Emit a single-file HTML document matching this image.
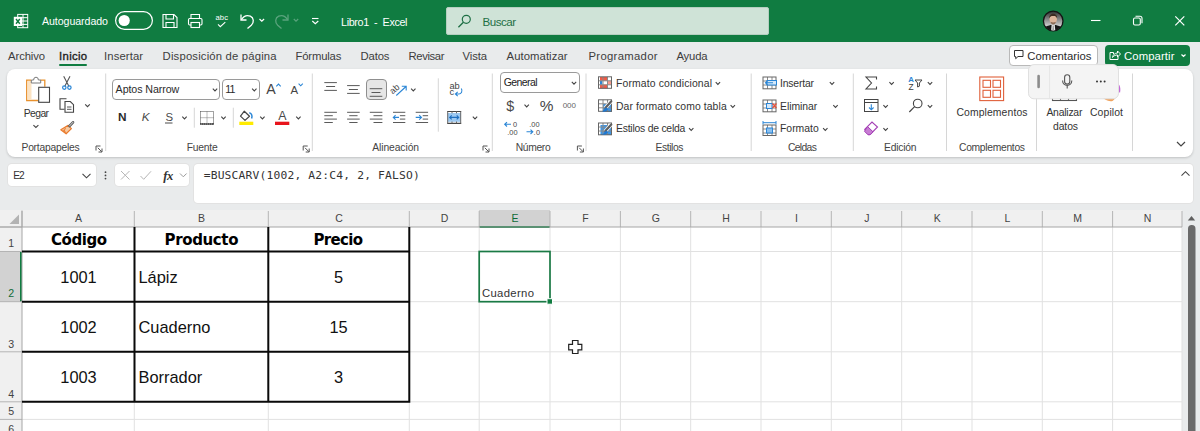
<!DOCTYPE html>
<html lang="es"><head><meta charset="utf-8"><title>Libro1 - Excel</title>
<style>
html,body{margin:0;padding:0}
body{width:1200px;height:431px;overflow:hidden;position:relative;background:#e9ebec;font-family:'Liberation Sans', sans-serif}
.b{position:absolute;box-sizing:border-box}
span{position:absolute;white-space:pre;line-height:1}
svg{position:absolute;left:0;top:0}
</style></head><body>
<div class="b" style="left:0;top:0;width:1200px;height:42px;background:#107c41"></div>
<div class="b" style="left:446px;top:7px;width:323px;height:28px;background:#cfe3d7;border:1px solid #b5cfc0;border-radius:2px"></div>
<div class="b" style="left:59px;top:64px;width:28px;height:2px;background:#107c41;border-radius:1px"></div>
<div class="b" style="left:1008.5px;top:45px;width:89px;height:20.5px;background:#fff;border:1px solid #b9b9b9;border-radius:4px"></div>
<div class="b" style="left:1105px;top:45px;width:85px;height:20.5px;background:#107c41;border-radius:4px"></div>
<div class="b" style="left:7px;top:69px;width:1186px;height:87.5px;background:#fff;border-radius:8px;box-shadow:0 1px 2.500px rgba(0,0,0,.18)"></div>
<div class="b" style="left:112px;top:79px;width:108px;height:21px;background:#fff;border:1px solid #9a9a9a;border-radius:4px"></div>
<div class="b" style="left:222px;top:79px;width:38px;height:21px;background:#fff;border:1px solid #9a9a9a;border-radius:4px"></div>
<div class="b" style="left:365.800px;top:79px;width:21px;height:21.200px;background:#e6e6e6;border:1px solid #8f8f8f;border-radius:4px"></div>
<div class="b" style="left:500px;top:72px;width:80px;height:21px;background:#fff;border:1px solid #9a9a9a;border-radius:4px"></div>
<div class="b" style="left:8px;top:164px;width:88px;height:22px;background:#fff;border-radius:4px;box-shadow:0 0 0 1px #e2e2e2"></div>
<div class="b" style="left:115px;top:164px;width:74px;height:22px;background:#fff;border-radius:4px;box-shadow:0 0 0 1px #e2e2e2"></div>
<div class="b" style="left:194px;top:164px;width:999px;height:39px;background:#fff;border-radius:4px;box-shadow:0 0 0 1px #e2e2e2"></div>
<div class="b" style="left:0;top:210px;width:1182px;height:221px;background:#fff"></div>
<div class="b" style="left:0;top:210px;width:1182px;height:17px;background:#f0f0f0"></div>
<div class="b" style="left:0;top:210px;width:22px;height:221px;background:#f0f0f0"></div>
<div class="b" style="left:479px;top:210px;width:71px;height:17.500px;background:#d2d2d2;border-bottom:2px solid #107c41"></div>
<div class="b" style="left:0;top:251.500px;width:22px;height:50.200px;background:#d2d2d2;border-right:2px solid #107c41"></div>
<svg width="1200" height="431" viewBox="0 0 1200 431" fill="none" stroke-linecap="butt">
<g stroke="#fff" stroke-width="1" fill="none"><rect x="17.700" y="14.400" width="10" height="13.300"/><path d="M17.700 17.700h10M17.700 21h10M17.700 24.400h10M23 14.400v13.300"/></g><rect x="13.800" y="16.800" width="8.200" height="9.200" fill="#fff"/><path d="M16 19l3.800 4.800M19.800 19l-3.800 4.800" stroke="#107c41" stroke-width="1.400"/>
<rect x="115.6" y="11.6" width="36.8" height="17.8" rx="8.9" stroke="#fff" stroke-width="1.2"/><circle cx="124.2" cy="20.5" r="5.6" fill="#fff"/>
<g stroke="#fff" stroke-width="1.1"><path d="M163 14.5h11l3 3v10h-14z"/><path d="M166 14.5v4.5h7.5v-4.5M166 27.5v-5h8v5"/></g>
<g stroke="#fff" stroke-width="1.1"><path d="M191 18.5v-4h8.500v4"/><rect x="188.5" y="18.5" width="13.500" height="6.500" rx="1.2"/><rect x="191" y="22.5" width="8.500" height="5" fill="#107c41"/></g>
<path d="M218 24.3l2.300 2.400 5-4.600" stroke="#fff" stroke-width="1.1"/>
<g stroke="#fff" stroke-width="1.3"><path d="M241 14.500v5.500h5.500"/><path d="M241.300 19.700c2-3 5.500-5 9-3.500 3.600 1.700 4 6 1 9l-3.800 3.300"/></g>
<path d="M259.500 19l2.300 2.200 2.300-2.200" stroke="#fff" stroke-width="1.2"/>
<g stroke="#5aa37d" stroke-width="1.300"><path d="M288 14.500v5.500h-5.500"/><path d="M287.700 19.700c-2-3-5.500-5-9-3.500-3.600 1.700-4 6-1 9l3.800 3.300"/></g>
<path d="M293.800 19l2.200 2.200 2.200-2.200" stroke="#5aa37d" stroke-width="1.200"/>
<path d="M312 18.500h6.500" stroke="#fff" stroke-width="1.100"/><path d="M312.300 21l3 2.600 3-2.600" stroke="#fff" stroke-width="1.200"/>
<circle cx="466.300" cy="19.300" r="4" stroke="#1e6f45" stroke-width="1.200"/><path d="M463.400 22.300l-5 5" stroke="#1e6f45" stroke-width="1.300"/>
<defs><linearGradient id="avg" x1="0" y1="0" x2="0" y2="1"><stop offset="0" stop-color="#2e2e2e"/><stop offset=".75" stop-color="#cfcfcf"/><stop offset="1" stop-color="#bdbdbd"/></linearGradient><clipPath id="avc"><circle cx="1053.200" cy="21" r="9.600"/></clipPath></defs><circle cx="1053.200" cy="21" r="9.800" fill="url(#avg)" stroke="#141414" stroke-width="1.300"/><g clip-path="url(#avc)"><path d="M1043 32v-3.500c2.500-2.300 6-3 7.500-3.500h5.400c1.500.5 5 1.200 7.500 3.500v3.500z" fill="#161616"/><path d="M1051.600 25h3.200l.6 7h-4.400z" fill="#e9e9e9"/><path d="M1052.700 25.500h1l.5 6h-2z" fill="#9a9a9a"/><ellipse cx="1053.200" cy="19.300" rx="3.700" ry="4.900" fill="#dcb49a"/><path d="M1049.300 18.300c-.6-6 8.400-6 7.800 0-.8-1.800-1.600-2.300-3.900-2.300s-3.100.5-3.900 2.300z" fill="#3b2a20"/><path d="M1050.600 21.800c1.600.8 3.600.8 5.200 0-.2 2-1.200 2.600-2.600 2.600s-2.400-.6-2.600-2.600z" fill="#8a6a55"/></g>
<path d="M1091 20.500h9.500" stroke="#fff" stroke-width="1.100"/>
<g stroke="#fff" stroke-width="1.100"><rect x="1133.500" y="18" width="6.800" height="7" rx="1.400"/><path d="M1135.500 16.200h4.500a2 2 0 0 1 2 2v5"/></g>
<path d="M1175.300 16.300l9 9M1184.300 16.300l-9 9" stroke="#fff" stroke-width="1.200"/>
<path d="M1014.500 50.500h8.500v6h-5l-2.300 2.200v-2.200h-1.200z" stroke="#333" stroke-width="1"/>
<g stroke="#fff" stroke-width="1"><path d="M1113.500 54v-1.500h-3.500v7h8v-3"/><path d="M1112.500 57.500c.5-3 2.500-4.500 5-4.500v-2l3 3-3 3v-2c-2 0-3.500.5-5 2.500z"/></g>
<path d="M1181.500 54.500l2 2 2-2" stroke="#fff" stroke-width="1.200"/>
<path d="M31 80.200h-4.300v20.300h11.500" stroke="#e8912d" stroke-width="1.300"/><path d="M40.500 80.200h4.300v6.500" stroke="#e8912d" stroke-width="1.300"/><path d="M27.500 81h4v19h-4z" fill="#fbe3c3" stroke="none"/><path d="M31.300 83v-3h2.300a2.400 2.800 0 0 1 4.800 0h2.300v3z" fill="#fff" stroke="#7a7a7a" stroke-width="1"/><rect x="38.700" y="87.300" width="10.800" height="15" fill="#fff" stroke="#444" stroke-width="1.100"/>
<path d="M33.40 125.10l2.50 2.40 2.50 -2.40" stroke="#444" stroke-width="1.1"/>
<g stroke="#555" stroke-width="1.100"><path d="M63.700 76.300l5.300 10.200M70 76.300l-5.300 10.200"/></g><circle cx="64.300" cy="87.600" r="1.700" stroke="#2b86d6" stroke-width="1.200"/><circle cx="69.400" cy="87.600" r="1.700" stroke="#2b86d6" stroke-width="1.200"/>
<g stroke="#444" stroke-width="1.100"><path d="M64.500 109.300h-4.500v-10.500h6.500"/><path d="M65 101.500h5.300l3.200 3.200v7.500h-8.500z" fill="#fff"/><path d="M67 107h4.500M67 109.300h4.500" stroke-width=".9"/></g>
<path d="M85.20 104.35l2.30 2.30 2.30 -2.30" stroke="#444" stroke-width="1.1"/>
<path d="M68.200 125.300l3.200 3.300-5.300 5.200-5.300-4z" fill="#f7c9a0" stroke="#ea7a2c" stroke-width="1.200" stroke-linejoin="round"/><path d="M63.200 130l3 2.700M65.500 127.800l-1.700 4" stroke="#ea7a2c" stroke-width="1"/><path d="M73 122.300l-3.600 3.800" stroke="#555" stroke-width="2.600" stroke-linecap="round"/><path d="M73 122.300l-3.600 3.800" stroke="#fff" stroke-width=".8" stroke-linecap="round"/>
<g stroke="#555" stroke-width="1"><path d="M96.0 150.5V146.0H100.5"/><path d="M97.8 147.8L101.8 151.8"/><path d="M102.0 148.5V152.0H98.5" /></g>
<path d="M105.7 73.5V151" stroke="#d6d6d6" stroke-width="1"/>
<path d="M212.80 88.70l2.20 2.20 2.20 -2.20" stroke="#444" stroke-width="1.1"/>
<path d="M252.10 88.70l2.20 2.20 2.20 -2.20" stroke="#444" stroke-width="1.1"/>
<path d="M276.300 86.300l2.200-2.200 2.200 2.200" stroke="#2b86d6" stroke-width="1.100"/>
<path d="M298.600 83.700l2.100 2.100 2.100-2.100" stroke="#2b86d6" stroke-width="1.100"/>
<path d="M165 123h7.500" stroke="#4a4a4a" stroke-width="1"/>
<path d="M182.30 116.70l2.20 2.20 2.20 -2.20" stroke="#444" stroke-width="1.1"/>
<path d="M194.3 107.7V127.7" stroke="#d6d6d6" stroke-width="1"/>
<g stroke="#444" stroke-width="1" stroke-dasharray="1 1"><rect x="200.500" y="111.500" width="13" height="12.500"/></g><path d="M200 124h14" stroke="#222" stroke-width="1.200"/><path d="M207 111.500v12.500M200.500 117.700h13" stroke="#777" stroke-width="1" stroke-dasharray="1 1"/>
<path d="M221.30 116.70l2.20 2.20 2.20 -2.20" stroke="#444" stroke-width="1.1"/>
<path d="M233.3 107.7V127.7" stroke="#d6d6d6" stroke-width="1"/>
<path d="M244.300 111.200l5.200 5-4.500 4.200-4.500-4.300z" fill="#fff" stroke="#444" stroke-width="1.200" stroke-linejoin="round"/><path d="M249.300 112.800c2.600.6 3.200 3.200 2.300 5.600" stroke="#2b86d6" stroke-width="1.500" fill="none"/><rect x="239.300" y="121.700" width="14" height="3.300" fill="#ffeb00"/>
<path d="M260.20 116.70l2.20 2.20 2.20 -2.20" stroke="#444" stroke-width="1.1"/>
<rect x="275" y="121.700" width="14.300" height="3.300" fill="#e8141c"/>
<path d="M296.20 116.70l2.20 2.20 2.20 -2.20" stroke="#444" stroke-width="1.1"/>
<g stroke="#555" stroke-width="1"><path d="M303.2 150.5V146.0H307.7"/><path d="M305.0 147.8L309.0 151.8"/><path d="M309.2 148.5V152.0H305.7" /></g>
<path d="M312.3 73.5V151" stroke="#d6d6d6" stroke-width="1"/>
<path d="M324.30 82.60h12.60M326.10 86.50h9.00M324.30 90.40h12.60" stroke="#5a5a5a" stroke-width="1.0"/>
<path d="M347.10 85.60h12.60M348.90 89.50h9.00M347.10 93.40h12.60" stroke="#5a5a5a" stroke-width="1.0"/>
<path d="M369.70 88.70h12.60M371.50 92.50h9.00M369.70 96.30h12.60" stroke="#5a5a5a" stroke-width="1.0"/>
<path d="M396.300 95.500l9.700-9M401.800 86.200h4.400v4.400" stroke="#2b86d6" stroke-width="1.100"/>
<path d="M411.10 88.70l2.20 2.20 2.20 -2.20" stroke="#444" stroke-width="1.1"/>
<path d="M324.30 112.30h12.60M324.30 115.70h8.50M324.30 119.10h12.60M324.30 122.50h8.50" stroke="#5a5a5a" stroke-width="1.0"/>
<path d="M347.10 112.30h12.60M349.25 115.70h8.30M347.10 119.10h12.60M349.25 122.50h8.30" stroke="#5a5a5a" stroke-width="1.0"/>
<path d="M369.80 112.30h12.60M373.50 115.70h8.90M369.80 119.10h12.60M373.50 122.50h8.90" stroke="#5a5a5a" stroke-width="1.0"/>
<path d="M393.00 112.30h12.30M399.90 115.70h5.40M399.90 119.10h5.40M393.00 122.50h12.30" stroke="#5a5a5a" stroke-width="1.0"/>
<path d="M399 117.400h-5.800M395.600 115.200l-2.300 2.200 2.300 2.200" stroke="#2b86d6" stroke-width="1.100"/>
<path d="M415.70 112.30h12.40M422.70 115.70h5.40M422.70 119.10h5.40M415.70 122.50h12.40" stroke="#5a5a5a" stroke-width="1.0"/>
<path d="M415.700 117.400h5.800M419.200 115.200l2.300 2.200-2.300 2.200" stroke="#2b86d6" stroke-width="1.100"/>
<path d="M438.3 78.3V131.7" stroke="#d6d6d6" stroke-width="1"/>
<path d="M461.300 88.500c1.600 2.500 0 5.500-2.500 5.500h-3.300M457.700 91.800l-2.300 2.200 2.300 2.200" stroke="#2b86d6" stroke-width="1.100"/>
<rect x="447.700" y="113" width="13" height="8.800" fill="#9cc9f2"/><path d="M447.200 111.500h14M447.200 123.300h14" stroke="#444" stroke-width="1.200"/><path d="M447.700 111.500v12M460.700 111.500v12" stroke="#666" stroke-width="1"/><path d="M452 111.500v1.800M456.500 111.500v1.800M452 121.500v1.800M456.500 121.500v1.800" stroke="#666" stroke-width="1"/><path d="M449.700 117.400h9M451.700 115.400l-2 2 2 2M456.700 115.400l2 2-2 2" stroke="#1f6fbf" stroke-width="1.100"/>
<path d="M472.80 116.70l2.20 2.20 2.20 -2.20" stroke="#444" stroke-width="1.1"/>
<g stroke="#555" stroke-width="1"><path d="M483.0 150.5V146.0H487.5"/><path d="M484.8 147.8L488.8 151.8"/><path d="M489.0 148.5V152.0H485.5" /></g>
<path d="M492.3 73.5V151" stroke="#d6d6d6" stroke-width="1"/>
<path d="M571.80 81.90l2.20 2.20 2.20 -2.20" stroke="#444" stroke-width="1.1"/>
<path d="M524.50 104.70l2.20 2.20 2.20 -2.20" stroke="#444" stroke-width="1.1"/>
<path d="M511 124.300h-6.300M507 122.100l-2.300 2.200 2.300 2.200" stroke="#2b86d6" stroke-width="1.100"/>
<path d="M526.500 131.800h6.300M530.500 129.600l2.300 2.200-2.300 2.200" stroke="#2b86d6" stroke-width="1.100"/>
<g stroke="#555" stroke-width="1"><path d="M577.4 150.5V146.0H581.9"/><path d="M579.1999999999999 147.8L583.1999999999999 151.8"/><path d="M583.4 148.5V152.0H579.9" /></g>
<path d="M586 73.5V151" stroke="#d6d6d6" stroke-width="1"/>
<rect x="600" y="77" width="7.500" height="3.800" fill="#ef5b47"/><rect x="600" y="84.700" width="7.500" height="3.800" fill="#ef5b47"/><rect x="607" y="80.800" width="4.500" height="3.900" fill="#f59a8c"/><rect x="600" y="80.800" width="2.300" height="3.900" fill="#2b86d6"/>
<path d="M598.5 80.8h13M598.5 84.8h13M603 76.8v11.5M607.5 76.8v11.5" stroke="#8a8a8a" stroke-width="1"/><rect x="598.5" y="76.8" width="13" height="11.5" stroke="#666" stroke-width="1"/>
<path d="M715.70 82.20l2.20 2.20 2.20 -2.20" stroke="#444" stroke-width="1.1"/>
<rect x="603" y="104" width="9" height="8" fill="#3d96e6"/>
<path d="M598.5 103.8h13M598.5 107.8h13M603 99.8v11.5M607.5 99.8v11.5" stroke="#8a8a8a" stroke-width="1"/><rect x="598.5" y="99.8" width="13" height="11.5" stroke="#666" stroke-width="1"/>
<path d="M611.3 101.3l-6.300 7" stroke="#fff" stroke-width="3.600"/><path d="M611.3 101.3l-6 6.600" stroke="#5f5f5f" stroke-width="2.200" stroke-linecap="round"/><path d="M606.2 107.2c-1.500 1-2 2.800-4.200 4.300 2.600.5 5-.5 6.200-2.600z" fill="#1f78d1"/>
<path d="M730.60 105.20l2.20 2.20 2.20 -2.20" stroke="#444" stroke-width="1.1"/>
<rect x="600.500" y="125" width="11" height="10" fill="#3d96e6"/>
<path d="M598.5 127.0h13M598.5 131.0h13M603 123.0v11.8M607.5 123.0v11.8" stroke="#8a8a8a" stroke-width="1"/><rect x="598.5" y="123.0" width="13" height="11.8" stroke="#666" stroke-width="1"/>
<path d="M611.3 124.5l-6.300 7" stroke="#fff" stroke-width="3.600"/><path d="M611.3 124.5l-6 6.600" stroke="#5f5f5f" stroke-width="2.200" stroke-linecap="round"/><path d="M606.2 130.4c-1.500 1-2 2.800-4.200 4.300 2.600.5 5-.5 6.200-2.600z" fill="#1f78d1"/>
<path d="M689.00 128.20l2.20 2.20 2.20 -2.20" stroke="#444" stroke-width="1.1"/>
<path d="M751.2 73.5V151" stroke="#d6d6d6" stroke-width="1"/>
<path d="M763.0 81.0h13M763.0 85.0h13M767.5 77.0v11.8M772.0 77.0v11.8" stroke="#8a8a8a" stroke-width="1"/><rect x="763.0" y="77.0" width="13" height="11.8" stroke="#666" stroke-width="1"/>
<rect x="767" y="80.500" width="9.500" height="4.500" fill="#d6e8f8" stroke="#2b86d6" stroke-width="1"/><path d="M773 82.800h-7.500M767.500 80.800l-2 2 2 2" stroke="#2b86d6" stroke-width="1.100"/>
<path d="M829.80 82.20l2.20 2.20 2.20 -2.20" stroke="#444" stroke-width="1.1"/>
<path d="M763.0 104.0h13M763.0 108.0h13M767.5 100.0v11.8M772.0 100.0v11.8" stroke="#8a8a8a" stroke-width="1"/><rect x="763.0" y="100.0" width="13" height="11.8" stroke="#666" stroke-width="1"/>
<rect x="766.500" y="103.500" width="5.500" height="5" fill="#d6e8f8" stroke="#2b86d6" stroke-width="1"/><path d="M772.500 103.500l4 4.500M776.500 103.500l-4 4.500" stroke="#e8503a" stroke-width="1.200"/>
<path d="M833.30 105.20l2.20 2.20 2.20 -2.20" stroke="#444" stroke-width="1.1"/>
<path d="M763.0 129.0h13M763.0 133.0h13M767.5 125.0v10.5M772.0 125.0v10.5" stroke="#8a8a8a" stroke-width="1"/><rect x="763.0" y="125.0" width="13" height="10.5" stroke="#666" stroke-width="1"/>
<rect x="766.500" y="128" width="6" height="5" fill="#8cc0ee" stroke="#2b86d6" stroke-width="1"/><path d="M763 122.700h13M763 121v3.400M776 121v3.400" stroke="#2b86d6" stroke-width="1"/>
<path d="M823.10 128.20l2.20 2.20 2.20 -2.20" stroke="#444" stroke-width="1.1"/>
<path d="M853.3 73.5V151" stroke="#d6d6d6" stroke-width="1"/>
<path d="M876.500 79.500v-2.500h-10.500l5.500 6-5.500 6h10.500v-2.500" stroke="#444" stroke-width="1.100"/>
<path d="M889.40 82.20l2.20 2.20 2.20 -2.20" stroke="#444" stroke-width="1.1"/>
<path d="M915 80h7l-2.600 3v3.200l-1.800.8v-4z" stroke="#444" stroke-width="1"/>
<path d="M927.80 82.20l2.20 2.20 2.20 -2.20" stroke="#444" stroke-width="1.1"/>
<rect x="864.500" y="99.500" width="13.500" height="12" stroke="#444" stroke-width="1"/><path d="M864.500 102.500h13.500" stroke="#444" stroke-width="1"/><path d="M871.300 104.300v5.500M869 107.500l2.300 2.300 2.300-2.300" stroke="#2b86d6" stroke-width="1.100"/>
<path d="M883.40 105.20l2.20 2.20 2.20 -2.20" stroke="#444" stroke-width="1.1"/>
<circle cx="917.700" cy="103.500" r="4.300" stroke="#444" stroke-width="1.100"/><path d="M914.600 106.700l-5.300 5.300" stroke="#444" stroke-width="1.200"/>
<path d="M927.80 105.20l2.20 2.20 2.20 -2.20" stroke="#444" stroke-width="1.1"/>
<path d="M864.700 129.300l7.300-7.300 5.500 5-7.300 7.500h-1.700z" stroke="#a43fb5" stroke-width="1.100" fill="#fff"/><path d="M867.500 126.500l5.500 5.300-3 3h-2l-3.500-3.500z" fill="#c77dd3" stroke="#a43fb5" stroke-width="1"/>
<path d="M883.40 128.20l2.20 2.20 2.20 -2.20" stroke="#444" stroke-width="1.1"/>
<path d="M946.5 73.5V151" stroke="#d6d6d6" stroke-width="1"/>
<g stroke="#e0603a" stroke-width="1.100"><rect x="979.800" y="77" width="23.800" height="23.600"/><rect x="983" y="80.300" width="7.500" height="7"/><rect x="993" y="80.300" width="7.500" height="7"/><rect x="983" y="90.300" width="7.500" height="7"/><rect x="993" y="90.300" width="7.500" height="7"/></g>
<path d="M1036.5 73.5V151" stroke="#d6d6d6" stroke-width="1"/>
<g stroke="#555" stroke-width="1.100"><rect x="1052.500" y="86.500" width="24" height="14"/><path d="M1060.500 86.500v14M1068.500 86.500v14"/></g>
<path d="M1100.500 93c0-4 10-8 15-6 2.500 3 1.500 11-3 14-4.500 1.200-12-3-12-8z" fill="#f0a35e"/><path d="M1114 83c4-1 7.500 2.500 6 10-2-2.500-4.500-6-6-10z" fill="#c46ad8"/>
<path d="M1132.5 73.5V151" stroke="#d6d6d6" stroke-width="1"/>
<path d="M1177 142l4 4 4-4" stroke="#444" stroke-width="1.200"/>
<rect x="1028.500" y="65" width="90" height="34" rx="5.500" fill="#000" opacity=".05"/><rect x="1028.500" y="64.600" width="90" height="34.200" rx="5.500" fill="#f4f4f4" stroke="#e0e0e0" stroke-width="1"/><path d="M1049.600 65.500v32.500" stroke="#e6e6e6" stroke-width="1"/><path d="M1038.600 76v11" stroke="#8c8c8c" stroke-width="2.600" stroke-linecap="round"/><rect x="1064.600" y="74.800" width="5.200" height="9.300" rx="2.600" stroke="#555" stroke-width="1.100"/><path d="M1062.600 80.500c0 6.600 9.200 6.600 9.200 0M1067.200 85.600v2.800" stroke="#555" stroke-width="1.100"/><circle cx="1097" cy="81.600" r="1" fill="#333"/><circle cx="1100.800" cy="81.600" r="1" fill="#333"/><circle cx="1104.600" cy="81.600" r="1" fill="#333"/>
<path d="M82.500 173.800l4 4 4-4" stroke="#444" stroke-width="1.100"/>
<circle cx="105.500" cy="172.200" r=".9" fill="#444"/><circle cx="105.500" cy="175.400" r=".9" fill="#444"/><circle cx="105.500" cy="178.600" r=".9" fill="#444"/>
<path d="M121 171l8.500 8.500M129.500 171l-8.500 8.500" stroke="#b5b5b5" stroke-width="1"/>
<path d="M140.500 176l3.200 3.300 7.300-8" stroke="#b5b5b5" stroke-width="1"/>
<path d="M180 173.500l3.300 3.300 3.300-3.300" stroke="#9a9a9a" stroke-width="1"/>
<path d="M1181.500 175.600l4-3.900 4 3.900" stroke="#444" stroke-width="1.100"/>
<path d="M134.3 227V431M268.3 227V431M409.3 227V431M479.2 227V431M550.0 227V431M620.4 227V431M690.7 227V431M761.0 227V431M831.3 227V431M901.7 227V431M972.0 227V431M1042.3 227V431M1112.6 227V431M1182.0 227V431M22 251.5H1182M22 301.7H1182M22 351.8H1182M22 401.8H1182M22 419.4H1182" stroke="#e1e1e1" stroke-width="1"/>
<path d="M22.0 211V227M134.3 211V227M268.3 211V227M409.3 211V227M479.2 211V227M550.0 211V227M620.4 211V227M690.7 211V227M761.0 211V227M831.3 211V227M901.7 211V227M972.0 211V227M1042.3 211V227M1112.6 211V227M1182.0 211V227M0 227.0H22M0 251.5H22M0 301.7H22M0 351.8H22M0 401.8H22M0 419.4H22" stroke="#b4b4b4" stroke-width="1"/>
<path d="M0 227H1182M22 210.500V431" stroke="#a6a6a6" stroke-width="1"/>
<path d="M19 214.500v9.500h-9.500z" fill="#b3b3b3"/>
<path d="M22 251.5H410.300M22 301.7H410.300M22 351.8H410.300M22 401.8H410.300M134.5 227V402.800M268.3 227V402.800M409.3 227V402.800" stroke="#0a0a0a" stroke-width="2"/>
<rect x="479.200" y="251.500" width="70.800" height="50.200" stroke="#1a7a45" stroke-width="1.700" fill="#fff"/><rect x="547" y="298.700" width="5.500" height="5.500" fill="#107c41" stroke="#fff" stroke-width="1"/>
<path d="M572.500 340.500h5.500v3.800h3.800v5.500h-3.800v3.700h-5.500v-3.700h-3.800v-5.500h3.800z" fill="#fff" stroke="#222" stroke-width="1.200"/>
<path d="M1187.800 220.500l3.700-4.500 3.700 4.500z" fill="#5f5f5f"/><rect x="1188" y="225" width="7.500" height="215" rx="3.700" fill="#6a6a6a"/>
</svg>
<span style="left:42.00px;top:16px;font:normal 400 10.6px/1 'Liberation Sans', sans-serif;color:#fff;letter-spacing:-0.053px;">Autoguardado</span>
<span style="left:215.50px;top:14px;font:normal 400 7.6px/1 'Liberation Sans', sans-serif;color:#fff;letter-spacing:0.125px;">abc</span>
<span style="left:341.00px;top:17px;font:normal 400 10.8px/1 'Liberation Sans', sans-serif;color:#fff;letter-spacing:-0.368px;">Libro1  -  Excel</span>
<span style="left:482.50px;top:16px;font:normal 400 11.6px/1 'Liberation Sans', sans-serif;color:#1e6f45;letter-spacing:-0.519px;">Buscar</span>
<span style="left:8.10px;top:51px;font:normal 400 11.3px/1 'Liberation Sans', sans-serif;color:#3d3d3d;letter-spacing:-0.129px;">Archivo</span>
<span style="left:104.10px;top:51px;font:normal 400 11.3px/1 'Liberation Sans', sans-serif;color:#3d3d3d;letter-spacing:0.098px;">Insertar</span>
<span style="left:162.60px;top:51px;font:normal 400 11.3px/1 'Liberation Sans', sans-serif;color:#3d3d3d;letter-spacing:0.173px;">Disposición de página</span>
<span style="left:295.50px;top:51px;font:normal 400 11.3px/1 'Liberation Sans', sans-serif;color:#3d3d3d;letter-spacing:-0.171px;">Fórmulas</span>
<span style="left:360.50px;top:51px;font:normal 400 11.3px/1 'Liberation Sans', sans-serif;color:#3d3d3d;letter-spacing:-0.129px;">Datos</span>
<span style="left:408.50px;top:51px;font:normal 400 11.3px/1 'Liberation Sans', sans-serif;color:#3d3d3d;letter-spacing:-0.383px;">Revisar</span>
<span style="left:462.50px;top:51px;font:normal 400 11.3px/1 'Liberation Sans', sans-serif;color:#3d3d3d;letter-spacing:-0.105px;">Vista</span>
<span style="left:506.60px;top:51px;font:normal 400 11.3px/1 'Liberation Sans', sans-serif;color:#3d3d3d;letter-spacing:0.062px;">Automatizar</span>
<span style="left:588.50px;top:51px;font:normal 400 11.3px/1 'Liberation Sans', sans-serif;color:#3d3d3d;letter-spacing:0.306px;">Programador</span>
<span style="left:676.40px;top:51px;font:normal 400 11.3px/1 'Liberation Sans', sans-serif;color:#3d3d3d;letter-spacing:-0.157px;">Ayuda</span>
<span style="left:59.10px;top:51px;font:normal 400 11.3px/1 'Liberation Sans', sans-serif;color:#222;letter-spacing:0.305px;-webkit-text-stroke:0.35px #222;">Inicio</span>
<span style="left:1027.30px;top:51px;font:normal 400 11.3px/1 'Liberation Sans', sans-serif;color:#2b2b2b;letter-spacing:0.015px;">Comentarios</span>
<span style="left:1124.00px;top:51px;font:normal 400 11.3px/1 'Liberation Sans', sans-serif;color:#fff;letter-spacing:0.113px;">Compartir</span>
<span style="left:23.80px;top:109px;font:normal 400 10.4px/1 'Liberation Sans', sans-serif;color:#333;letter-spacing:-0.634px;">Pegar</span>
<span style="left:21.50px;top:143px;font:normal 400 10.3px/1 'Liberation Sans', sans-serif;color:#444;letter-spacing:-0.235px;">Portapapeles</span>
<span style="left:115.60px;top:84px;font:normal 400 10.7px/1 'Liberation Sans', sans-serif;color:#2b2b2b;letter-spacing:-0.095px;">Aptos Narrow</span>
<span style="left:225.20px;top:84px;font:normal 400 10.7px/1 'Liberation Sans', sans-serif;color:#2b2b2b;letter-spacing:0.000px;letter-spacing:-0.8px;">11</span>
<span style="left:266.20px;top:82px;font:normal 400 14.2px/1 'Liberation Sans', sans-serif;color:#444;letter-spacing:0.000px;">A</span>
<span style="left:290.50px;top:85px;font:normal 400 11.4px/1 'Liberation Sans', sans-serif;color:#444;letter-spacing:0.000px;">A</span>
<span style="left:118.10px;top:112px;font:normal 700 11.8px/1 'Liberation Sans', sans-serif;color:#2b2b2b;letter-spacing:0.000px;">N</span>
<span style="left:141.70px;top:112px;font:italic 400 11.8px/1 'Liberation Sans', sans-serif;color:#4a4a4a;letter-spacing:0.000px;">K</span>
<span style="left:165.40px;top:112px;font:normal 400 11.4px/1 'Liberation Sans', sans-serif;color:#4a4a4a;letter-spacing:0.000px;">S</span>
<span style="left:278.17px;top:110px;font:normal 400 12.4px/1 'Liberation Sans', sans-serif;color:#4a4a4a;letter-spacing:0.000px;">A</span>
<span style="left:186.70px;top:143px;font:normal 400 10.3px/1 'Liberation Sans', sans-serif;color:#444;letter-spacing:-0.212px;">Fuente</span>
<span style="left:393.80px;top:87px;font:normal 400 9px/1 'Liberation Sans', sans-serif;color:#444;letter-spacing:0.000px;transform:rotate(-42deg);transform-origin:0 100%;">ab</span>
<span style="left:449.40px;top:82px;font:normal 400 9.3px/1 'Liberation Sans', sans-serif;color:#444;letter-spacing:0.000px;">ab</span>
<span style="left:449.60px;top:88px;font:normal 400 9.3px/1 'Liberation Sans', sans-serif;color:#444;letter-spacing:0.000px;">c</span>
<span style="left:372.30px;top:143px;font:normal 400 10.3px/1 'Liberation Sans', sans-serif;color:#444;letter-spacing:-0.091px;">Alineación</span>
<span style="left:503.80px;top:77px;font:normal 400 10.5px/1 'Liberation Sans', sans-serif;color:#222;letter-spacing:-0.593px;">General</span>
<span style="left:506.30px;top:99px;font:normal 400 14.4px/1 'Liberation Sans', sans-serif;color:#4a4a4a;letter-spacing:0.000px;">$</span>
<span style="left:539.70px;top:98px;font:normal 400 15.4px/1 'Liberation Sans', sans-serif;color:#444;letter-spacing:0.000px;">%</span>
<span style="left:562.70px;top:102px;font:normal 400 8px/1 'Liberation Sans', sans-serif;color:#666;letter-spacing:-0.030px;">000</span>
<span style="left:513.00px;top:121px;font:normal 400 7.4px/1 'Liberation Sans', sans-serif;color:#4a4a4a;letter-spacing:0.000px;">0</span>
<span style="left:507.30px;top:129px;font:normal 400 7.4px/1 'Liberation Sans', sans-serif;color:#4a4a4a;letter-spacing:0.009px;">.00</span>
<span style="left:529.30px;top:121px;font:normal 400 7.4px/1 'Liberation Sans', sans-serif;color:#4a4a4a;letter-spacing:0.009px;">.00</span>
<span style="left:533.60px;top:129px;font:normal 400 7.4px/1 'Liberation Sans', sans-serif;color:#4a4a4a;letter-spacing:0.228px;">.0</span>
<span style="left:515.70px;top:143px;font:normal 400 10.3px/1 'Liberation Sans', sans-serif;color:#444;letter-spacing:-0.325px;">Número</span>
<span style="left:616.00px;top:79px;font:normal 400 10.4px/1 'Liberation Sans', sans-serif;color:#333;letter-spacing:0.135px;">Formato condicional</span>
<span style="left:616.00px;top:102px;font:normal 400 10.4px/1 'Liberation Sans', sans-serif;color:#333;letter-spacing:0.101px;">Dar formato como tabla</span>
<span style="left:616.00px;top:124px;font:normal 400 10.4px/1 'Liberation Sans', sans-serif;color:#333;letter-spacing:-0.232px;">Estilos de celda</span>
<span style="left:655.50px;top:143px;font:normal 400 10.3px/1 'Liberation Sans', sans-serif;color:#444;letter-spacing:-0.388px;">Estilos</span>
<span style="left:780.00px;top:79px;font:normal 400 10.4px/1 'Liberation Sans', sans-serif;color:#333;letter-spacing:-0.176px;">Insertar</span>
<span style="left:780.00px;top:102px;font:normal 400 10.4px/1 'Liberation Sans', sans-serif;color:#333;letter-spacing:-0.033px;">Eliminar</span>
<span style="left:780.00px;top:124px;font:normal 400 10.4px/1 'Liberation Sans', sans-serif;color:#333;letter-spacing:0.002px;">Formato</span>
<span style="left:788.00px;top:143px;font:normal 400 10.3px/1 'Liberation Sans', sans-serif;color:#444;letter-spacing:-0.653px;">Celdas</span>
<span style="left:908.30px;top:76px;font:normal 700 7.8px/1 'Liberation Sans', sans-serif;color:#2b86d6;letter-spacing:0.000px;">A</span>
<span style="left:908.50px;top:83px;font:normal 400 8.4px/1 'Liberation Sans', sans-serif;color:#3b3b3b;letter-spacing:0.000px;">Z</span>
<span style="left:884.00px;top:143px;font:normal 400 10.3px/1 'Liberation Sans', sans-serif;color:#444;letter-spacing:-0.214px;">Edición</span>
<span style="left:956.40px;top:108px;font:normal 400 10.4px/1 'Liberation Sans', sans-serif;color:#333;letter-spacing:0.110px;">Complementos</span>
<span style="left:959.00px;top:143px;font:normal 400 10.3px/1 'Liberation Sans', sans-serif;color:#444;letter-spacing:-0.295px;">Complementos</span>
<span style="left:1046.40px;top:108px;font:normal 400 10.4px/1 'Liberation Sans', sans-serif;color:#333;letter-spacing:-0.221px;">Analizar</span>
<span style="left:1053.00px;top:122px;font:normal 400 10.4px/1 'Liberation Sans', sans-serif;color:#333;letter-spacing:-0.105px;">datos</span>
<span style="left:1090.00px;top:108px;font:normal 400 10.4px/1 'Liberation Sans', sans-serif;color:#333;letter-spacing:0.107px;">Copilot</span>
<span style="left:13.30px;top:171px;font:normal 400 10.2px/1 'Liberation Sans', sans-serif;color:#333;letter-spacing:-1.169px;">E2</span>
<span style="left:163.30px;top:170px;font:italic 700 12.6px/1 'Liberation Serif', serif;color:#333;letter-spacing:-0.500px;">fx</span>
<span style="left:203.70px;top:170px;font:normal 400 11.3px/1 'DejaVu Sans Mono', 'Liberation Mono', monospace;color:#333;letter-spacing:0.175px;">=BUSCARV(1002, A2:C4, 2, FALSO)</span>
<span style="left:74.94px;top:213px;font:normal 400 10.5px/1 'Liberation Sans', sans-serif;color:#444;letter-spacing:0.000px;">A</span>
<span style="left:198.09px;top:213px;font:normal 400 10.5px/1 'Liberation Sans', sans-serif;color:#444;letter-spacing:0.000px;">B</span>
<span style="left:335.30px;top:213px;font:normal 400 10.5px/1 'Liberation Sans', sans-serif;color:#444;letter-spacing:0.000px;">C</span>
<span style="left:440.75px;top:213px;font:normal 400 10.5px/1 'Liberation Sans', sans-serif;color:#444;letter-spacing:0.000px;">D</span>
<span style="left:511.39px;top:213px;font:normal 400 10.5px/1 'Liberation Sans', sans-serif;color:#0e6a37;letter-spacing:0.000px;">E</span>
<span style="left:582.29px;top:213px;font:normal 400 10.5px/1 'Liberation Sans', sans-serif;color:#444;letter-spacing:0.000px;">F</span>
<span style="left:651.76px;top:213px;font:normal 400 10.5px/1 'Liberation Sans', sans-serif;color:#444;letter-spacing:0.000px;">G</span>
<span style="left:722.35px;top:213px;font:normal 400 10.5px/1 'Liberation Sans', sans-serif;color:#444;letter-spacing:0.000px;">H</span>
<span style="left:794.99px;top:213px;font:normal 400 10.5px/1 'Liberation Sans', sans-serif;color:#444;letter-spacing:0.000px;">I</span>
<span style="left:864.17px;top:213px;font:normal 400 10.5px/1 'Liberation Sans', sans-serif;color:#444;letter-spacing:0.000px;">J</span>
<span style="left:933.64px;top:213px;font:normal 400 10.5px/1 'Liberation Sans', sans-serif;color:#444;letter-spacing:0.000px;">K</span>
<span style="left:1004.53px;top:213px;font:normal 400 10.5px/1 'Liberation Sans', sans-serif;color:#444;letter-spacing:0.000px;">L</span>
<span style="left:1073.37px;top:213px;font:normal 400 10.5px/1 'Liberation Sans', sans-serif;color:#444;letter-spacing:0.000px;">M</span>
<span style="left:1143.80px;top:213px;font:normal 400 10.5px/1 'Liberation Sans', sans-serif;color:#444;letter-spacing:0.000px;">N</span>
<span style="left:8.30px;top:238px;font:normal 400 10.6px/1 'Liberation Sans', sans-serif;color:#444;letter-spacing:0.000px;">1</span>
<span style="left:8.30px;top:288px;font:normal 400 10.6px/1 'Liberation Sans', sans-serif;color:#0e6a37;letter-spacing:0.000px;">2</span>
<span style="left:8.30px;top:339px;font:normal 400 10.6px/1 'Liberation Sans', sans-serif;color:#444;letter-spacing:0.000px;">3</span>
<span style="left:8.30px;top:389px;font:normal 400 10.6px/1 'Liberation Sans', sans-serif;color:#444;letter-spacing:0.000px;">4</span>
<span style="left:8.30px;top:406px;font:normal 400 10.6px/1 'Liberation Sans', sans-serif;color:#444;letter-spacing:0.000px;">5</span>
<span style="left:8.30px;top:424px;font:normal 400 10.6px/1 'Liberation Sans', sans-serif;color:#444;letter-spacing:0.000px;">6</span>
<span style="left:51.00px;top:233px;font:normal 700 15px/1 'DejaVu Sans', 'Liberation Sans', sans-serif;color:#000;letter-spacing:-0.450px;">Código</span>
<span style="left:164.50px;top:233px;font:normal 700 15px/1 'DejaVu Sans', 'Liberation Sans', sans-serif;color:#000;letter-spacing:-0.355px;">Producto</span>
<span style="left:313.50px;top:233px;font:normal 700 15px/1 'DejaVu Sans', 'Liberation Sans', sans-serif;color:#000;letter-spacing:-0.681px;">Precio</span>
<span style="left:60.27px;top:269px;font:normal 400 16.4px/1 'Liberation Sans', sans-serif;color:#111;letter-spacing:0.000px;">1001</span>
<span style="left:138.50px;top:269px;font:normal 400 16.4px/1 'Liberation Sans', sans-serif;color:#111;letter-spacing:0.000px;">Lápiz</span>
<span style="left:334.04px;top:269px;font:normal 400 16.4px/1 'Liberation Sans', sans-serif;color:#111;letter-spacing:0.000px;">5</span>
<span style="left:60.27px;top:319px;font:normal 400 16.4px/1 'Liberation Sans', sans-serif;color:#111;letter-spacing:0.000px;">1002</span>
<span style="left:138.50px;top:319px;font:normal 400 16.4px/1 'Liberation Sans', sans-serif;color:#111;letter-spacing:0.000px;">Cuaderno</span>
<span style="left:329.48px;top:319px;font:normal 400 16.4px/1 'Liberation Sans', sans-serif;color:#111;letter-spacing:0.000px;">15</span>
<span style="left:60.27px;top:369px;font:normal 400 16.4px/1 'Liberation Sans', sans-serif;color:#111;letter-spacing:0.000px;">1003</span>
<span style="left:138.50px;top:369px;font:normal 400 16.4px/1 'Liberation Sans', sans-serif;color:#111;letter-spacing:0.000px;">Borrador</span>
<span style="left:334.04px;top:369px;font:normal 400 16.4px/1 'Liberation Sans', sans-serif;color:#111;letter-spacing:0.000px;">3</span>
<span style="left:482.00px;top:288px;font:normal 400 11.3px/1 'Liberation Sans', sans-serif;color:#333;letter-spacing:0.339px;">Cuaderno</span>
</body></html>
